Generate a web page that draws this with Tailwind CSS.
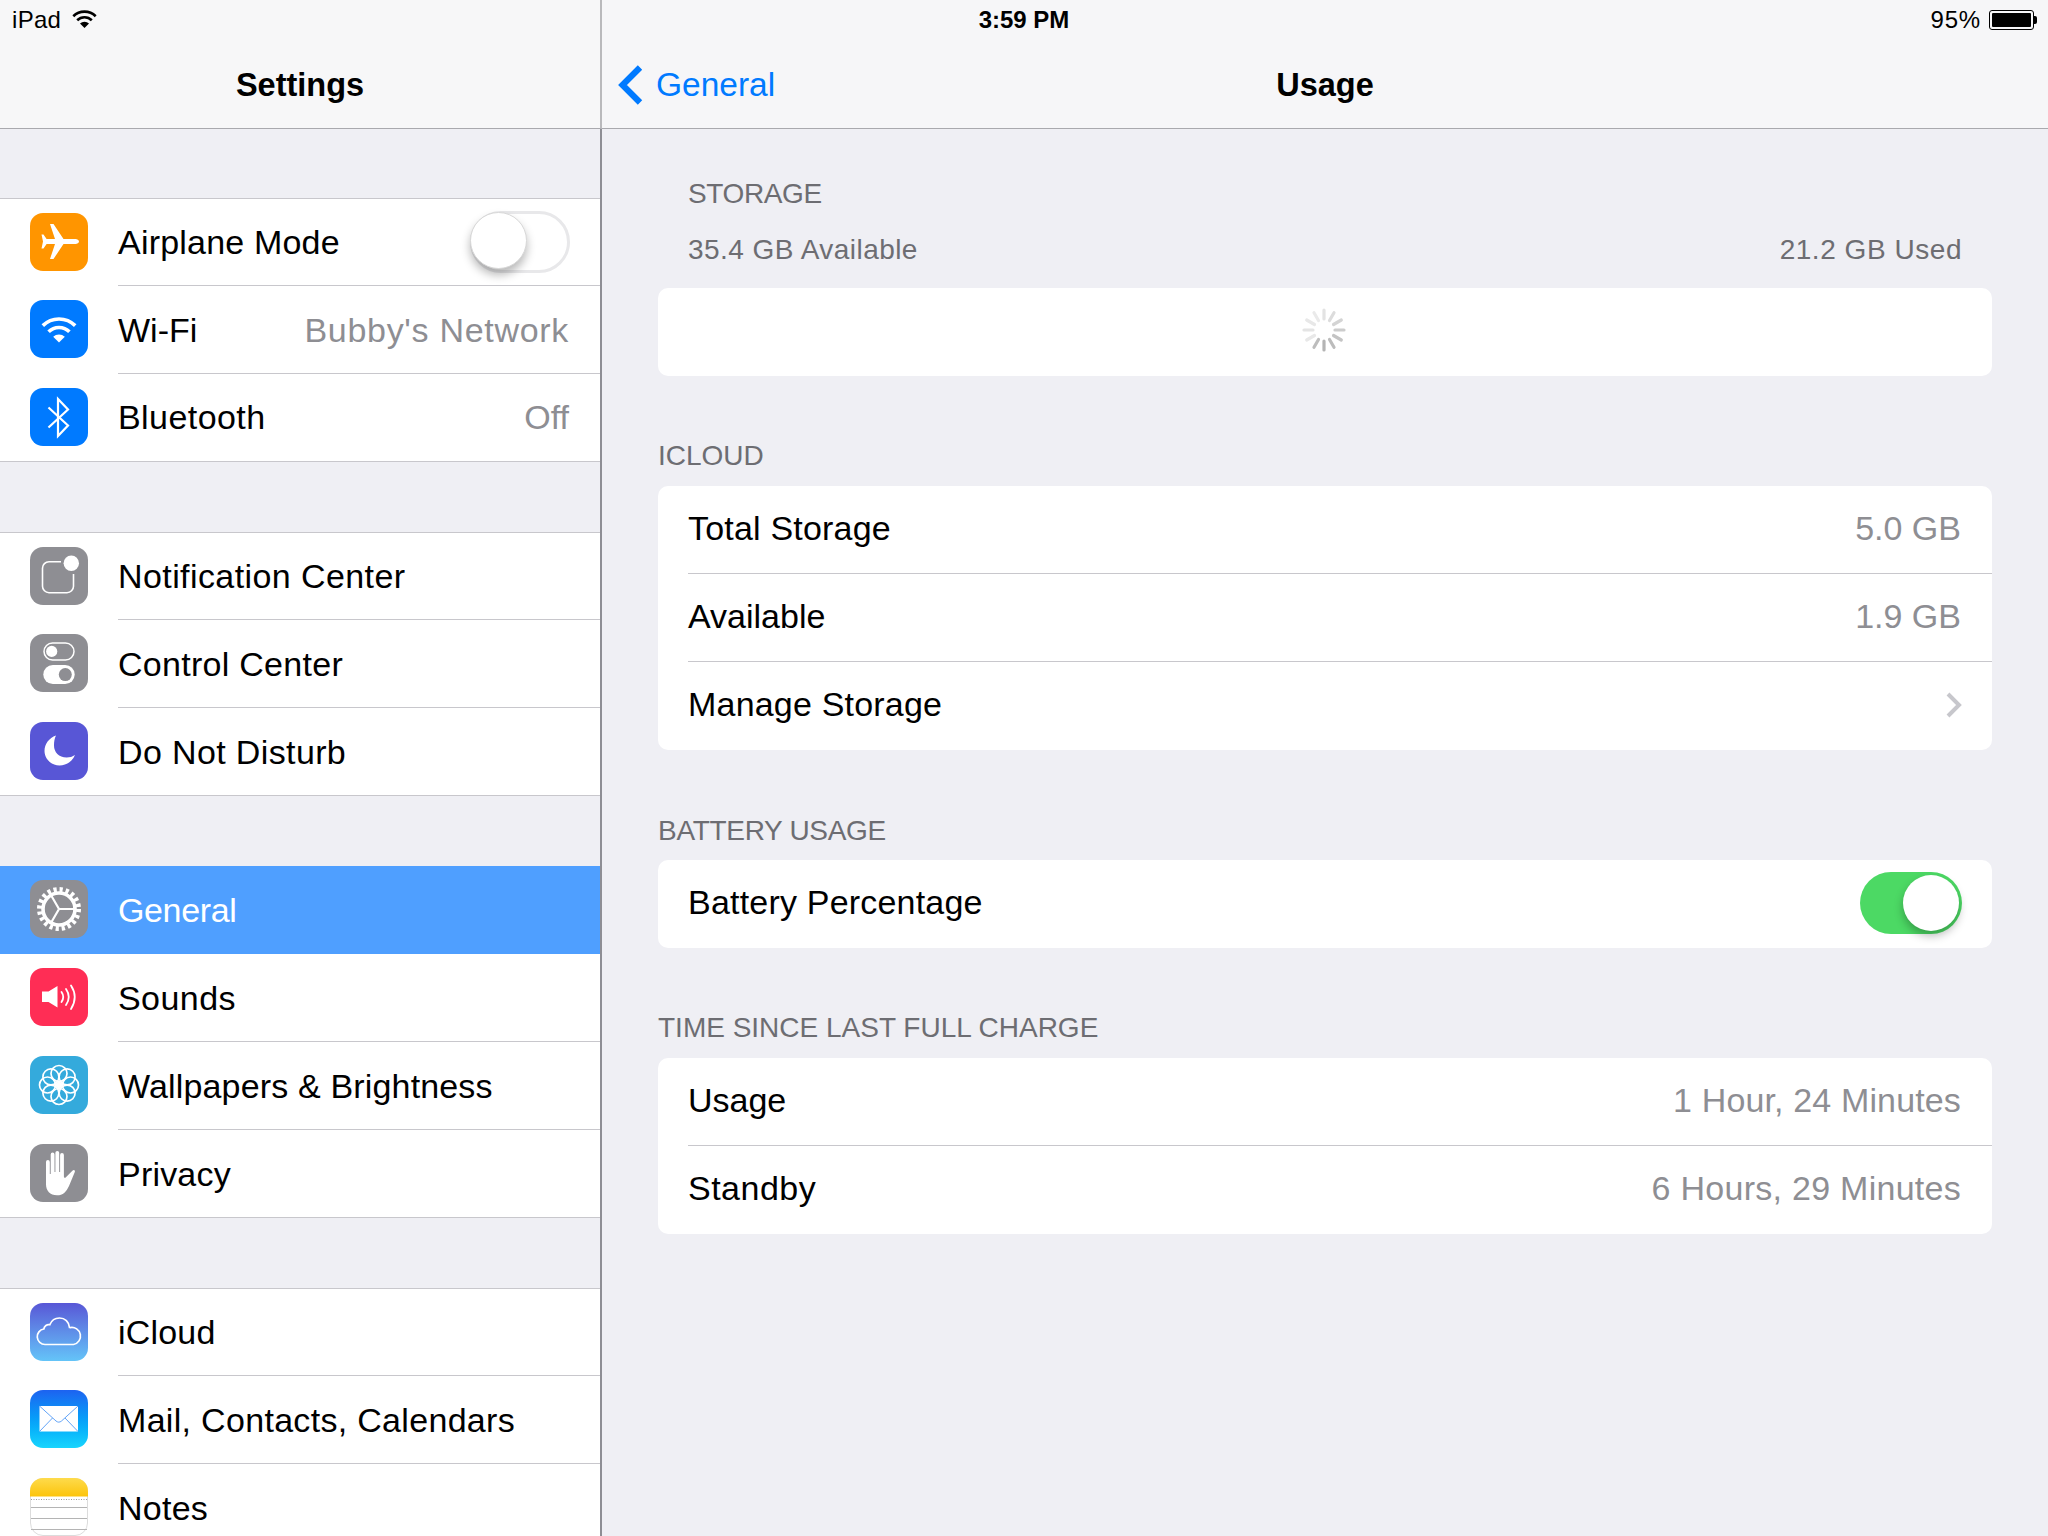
<!DOCTYPE html>
<html><head><meta charset="utf-8"><script src="https://cdn.jsdelivr.net/npm/@tailwindcss/browser@4"></script></head>
<body class="m-0">
<div class="relative flex w-[2048px] h-[1536px] overflow-hidden bg-[#efeff4] text-black font-['Liberation_Sans',Arial,sans-serif]">

  <!-- status bar -->
  <div class="absolute top-0 inset-x-0 h-[40px] text-[24px] leading-[40px] z-10">
    <div class="absolute left-[12px] top-0 flex items-center h-[40px] gap-[11px]">
      <span class="tracking-[0.3px]">iPad</span>
      <svg width="25" height="18" viewBox="0 0 25 18" class="-mt-[2px]"><g fill="none" stroke="#000" stroke-width="2.6"><path d="M1.3 6.2a16 16 0 0 1 22.4 0"/><path d="M5.2 10.2a10.4 10.4 0 0 1 14.6 0"/></g><path d="M8 13.5a6.4 6.4 0 0 1 9 0L12.5 18z" fill="#000"/></svg>
    </div>
    <div class="absolute left-0 right-0 top-0 text-center font-bold">3:59 PM</div>
    <div class="absolute right-[11px] top-0 flex items-center h-[40px] gap-[8px]">
      <span class="tracking-[0.8px]">95%</span>
      <div class="flex items-center">
        <div class="w-[45px] h-[20px] rounded-[3px] border border-black p-[2px]"><div class="w-[39px] h-full bg-black rounded-[1px]"></div></div>
        <div class="w-[3px] h-[8px] bg-black rounded-r-[2px]"></div>
      </div>
    </div>
  </div>

  <!-- sidebar -->
  <aside class="w-[602px] h-full shrink-0 flex flex-col">
    <header class="h-[129px] shrink-0 bg-[#f7f7f8] border-b border-b-[#a9a9ae] border-r-2 border-r-[#b9b9bc] pt-[40px] flex items-center justify-center">
      <h1 class="text-[32.5px] font-bold leading-[90px] mt-[1px]">Settings</h1>
    </header>
    <div class="flex-1 min-h-0 flex flex-col border-r-2 border-[#8e8e94]">

    <div class="mt-[69px] border-t border-[#c8c7cc] bg-white h-[264px] flex flex-col">
      <div class="h-[87px] flex items-center pl-[30px] shrink-0">
        <svg width="58" height="58" viewBox="0 0 58 58" class="shrink-0 -translate-y-px rounded-[13px] bg-[#ff9500]"><path d="M49 28.500c0-1.600-1.800-2.500-3.500-2.500H33.500L23.500 11H20l5 15H16.600L13.500 21.500H11.500l1.500 7-1.500 7h2l3.100-4.500H25L20 46h3.500l10-15h12c1.700 0 3.500-.9 3.500-2.500z" fill="#fff"/></svg>
        <div class="flex-1 h-full ml-[30px] border-b border-[#c8c7cc] flex items-center justify-between pr-[30px] text-[34px]">
          <span class="tracking-[0.2px]">Airplane Mode</span>
          <div class="relative w-[100px] h-[62px] rounded-full border-[3px] border-[#e8e8ea] bg-white">
            <div class="absolute -left-[3px] -top-[2px] w-[57px] h-[57px] rounded-full bg-white border border-[#d8d8d8] shadow-[0_6px_10px_rgba(0,0,0,0.28)]"></div>
          </div>
        </div>
      </div>
      <div class="h-[88px] flex items-center pl-[30px] shrink-0">
        <svg width="58" height="58" viewBox="0 0 58 58" class="shrink-0 -translate-y-px rounded-[13px] bg-[#007aff]"><g fill="none" stroke="#fff" stroke-width="3.600"><path d="M12.800 25.600a23 23 0 0 1 32.400 0"/><path d="M18.600 31.800a14.600 14.600 0 0 1 20.800 0"/></g><path d="M23.200 36.800a8.200 8.200 0 0 1 11.600 0L29 42.600z" fill="#fff"/></svg>
        <div class="flex-1 h-full ml-[30px] border-b border-[#c8c7cc] flex items-center justify-between pr-[31px] text-[34px]">
          <span class="translate-y-px">Wi-Fi</span><span class="translate-y-px text-[#8e8e93] tracking-[0.7px]">Bubby's Network</span>
        </div>
      </div>
      <div class="h-[88px] flex items-center pl-[30px] shrink-0 border-b border-[#c8c7cc]">
        <svg width="58" height="58" viewBox="0 0 58 58" class="shrink-0 -translate-y-px rounded-[13px] bg-[#007aff]"><path d="M18.500 19.500 38 37.500 28 48V11l10 10.500L18.500 39.500" fill="none" stroke="#fff" stroke-width="2.200"/></svg>
        <div class="flex-1 h-full ml-[30px] flex items-center justify-between pr-[31px] text-[34px]">
          <span class="tracking-[0.43px]">Bluetooth</span><span class="text-[#8e8e93]">Off</span>
        </div>
      </div>
    </div>

    <div class="mt-[70px] border-t border-[#c8c7cc] bg-white h-[264px] flex flex-col">
      <div class="h-[87px] flex items-center pl-[30px] shrink-0">
        <svg width="58" height="58" viewBox="0 0 58 58" class="shrink-0 -translate-y-px rounded-[13px] bg-[#8e8e93]"><path d="M31 14.700H19a6.500 6.500 0 0 0-6.500 6.500v18A6.500 6.500 0 0 0 19 45.700h18a6.500 6.500 0 0 0 6.500-6.500V27" fill="none" stroke="#fff" stroke-width="1.600"/><circle cx="41.300" cy="16.300" r="7.700" fill="#fff"/></svg>
        <div class="flex-1 h-full ml-[30px] border-b border-[#c8c7cc] flex items-center text-[34px] tracking-[0.41px]">Notification Center</div>
      </div>
      <div class="h-[88px] flex items-center pl-[30px] shrink-0">
        <svg width="58" height="58" viewBox="0 0 58 58" class="shrink-0 -translate-y-px rounded-[13px] bg-[#8e8e93]"><rect x="14" y="9" width="30" height="17" rx="8.500" fill="none" stroke="#fff" stroke-width="1.500"/><circle cx="21.700" cy="17.400" r="5.600" fill="#fff"/><rect x="13.300" y="31" width="31.400" height="19" rx="9.500" fill="#fff"/><circle cx="35.300" cy="40.600" r="6.500" fill="#8e8e93"/></svg>
        <div class="flex-1 h-full ml-[30px] border-b border-[#c8c7cc] flex items-center text-[34px] tracking-[0.28px]"><span class="translate-y-px">Control Center</span></div>
      </div>
      <div class="h-[88px] flex items-center pl-[30px] shrink-0 border-b border-[#c8c7cc]">
        <svg width="58" height="58" viewBox="0 0 58 58" class="shrink-0 -translate-y-px rounded-[13px] bg-[#5856d6]"><path d="M26 13.500c-7 2.500-11.500 8.500-11.500 15.500 0 8 6.800 14.500 15 14.500 6.700 0 12.700-4 15.500-10.500-2.500 1.700-5.300 2.500-8.300 2.500-8 0-12.700-5.500-12.700-12 0-3.800.5-7 2-10z" fill="#fff"/></svg>
        <div class="flex-1 h-full ml-[30px] flex items-center text-[34px] tracking-[0.37px]"><span class="translate-y-px">Do Not Disturb</span></div>
      </div>
    </div>

    <div class="mt-[70px] flex flex-col shrink-0 bg-white">
      <div class="h-[88px] flex items-center pl-[30px] shrink-0 bg-[#4f9fff]">
        <svg width="58" height="58" viewBox="0 0 58 58" class="shrink-0 -translate-y-px rounded-[13px] bg-[#8e8e93]"><circle cx="29" cy="29" r="19.500" fill="none" stroke="#fff" stroke-width="5" stroke-dasharray="3.200 2.925"/><circle cx="29" cy="29" r="16" fill="none" stroke="#fff" stroke-width="3.600"/><path d="M29 29H44M29 29 21.500 16M29 29 21.500 42" stroke="#fff" stroke-width="2.200" fill="none"/></svg>
        <div class="flex-1 h-full ml-[30px] flex items-center text-[34px] text-white tracking-[-0.37px]">General</div>
      </div>
      <div class="h-[88px] flex items-center pl-[30px] shrink-0">
        <svg width="58" height="58" viewBox="0 0 58 58" class="shrink-0 -translate-y-px rounded-[13px] bg-[#ff2d55]"><path d="M12 23.500h6.500L27.500 18v21.500L18.500 34H12z" fill="#fff"/><g fill="none" stroke="#fff" stroke-width="1.800" stroke-linecap="round"><path d="M31.500 24q3.500 5 0 10"/><path d="M36 21q5.500 8 0 16"/><path d="M41 17.500q7.500 11.500 0 23.500"/></g></svg>
        <div class="flex-1 h-full ml-[30px] border-b border-[#c8c7cc] flex items-center text-[34px] tracking-[0.43px]"><span class="translate-y-px">Sounds</span></div>
      </div>
      <div class="h-[88px] flex items-center pl-[30px] shrink-0">
        <svg width="58" height="58" viewBox="0 0 58 58" class="shrink-0 -translate-y-px rounded-[13px] bg-[#34aadc]"><g fill="none" stroke="#fff" stroke-width="1.700"><circle cx="29" cy="17.500" r="8"/><circle cx="37.100" cy="20.900" r="8"/><circle cx="40.500" cy="29" r="8"/><circle cx="37.100" cy="37.100" r="8"/><circle cx="29" cy="40.500" r="8"/><circle cx="20.900" cy="37.100" r="8"/><circle cx="17.500" cy="29" r="8"/><circle cx="20.900" cy="20.900" r="8"/></g><circle cx="29" cy="29" r="3.200" fill="#fff"/></svg>
        <div class="flex-1 h-full ml-[30px] border-b border-[#c8c7cc] flex items-center text-[34px] tracking-[0.16px]"><span class="translate-y-px">Wallpapers &amp; Brightness</span></div>
      </div>
      <div class="h-[88px] flex items-center pl-[30px] shrink-0 border-b border-[#c8c7cc]">
        <svg width="58" height="58" viewBox="0 0 58 58" class="shrink-0 -translate-y-px rounded-[13px] bg-[#8e8e93]"><path d="M16 18a1.900 1.900 0 0 1 3.800 0v12h.9V10.500a1.900 1.900 0 0 1 3.800 0V28h.9V8.800a1.900 1.900 0 0 1 3.800 0V28h.9V11a1.900 1.900 0 0 1 3.800 0v21.500c0 1.200 1.100 1.700 2 .7l6.500-6.500c1.600-1.500 3.300 0 2.300 1.500L39 42c-2.800 6-6 9.300-12 9.300-7 0-11-4.500-11-11z" fill="#fff"/></svg>
        <div class="flex-1 h-full ml-[30px] flex items-center text-[34px] tracking-[0.2px]"><span class="translate-y-px">Privacy</span></div>
      </div>
    </div>

    <div class="mt-[70px] border-t border-[#c8c7cc] bg-white flex-1 flex flex-col">
      <div class="h-[87px] flex items-center pl-[30px] shrink-0">
        <svg width="58" height="58" viewBox="0 0 58 58" class="shrink-0 -translate-y-px rounded-[13px] bg-gradient-to-b from-[#5856d6] to-[#64c4f8]"><path d="M15 41.500a7.800 7.800 0 0 1-1.200-15.500c.5-3 3.300-5 6-4.200C21.500 17.500 25.500 15 29.500 15c5.500 0 9.500 4 10 9.500.2 0 .5 0 .7.100a8.500 8.500 0 0 1 3.300 16.900z" fill="none" stroke="#fff" stroke-width="1.700"/></svg>
        <div class="flex-1 h-full ml-[30px] border-b border-[#c8c7cc] flex items-center text-[34px] tracking-[0.2px]">iCloud</div>
      </div>
      <div class="h-[88px] flex items-center pl-[30px] shrink-0">
        <svg width="58" height="58" viewBox="0 0 58 58" class="shrink-0 -translate-y-px rounded-[13px] bg-gradient-to-b from-[#1d62f0] to-[#19d5fd]"><rect x="9.500" y="16" width="38.500" height="25.500" fill="#fff"/><path d="M9.500 16 26 31c1.800 1.500 3.700 1.500 5.500 0L48 16M9.500 41.500 22.500 28M48 41.500 35 28" fill="none" stroke="#3b8df5" stroke-width=".8"/></svg>
        <div class="flex-1 h-full ml-[30px] border-b border-[#c8c7cc] flex items-center text-[34px] tracking-[0.31px]"><span class="translate-y-px">Mail, Contacts, Calendars</span></div>
      </div>
      <div class="h-[88px] flex items-center pl-[30px] shrink-0">
        <svg width="58" height="58" viewBox="0 0 58 58" class="shrink-0 self-start mt-[14px]"><defs><linearGradient id="ny" x1="0" y1="0" x2="0" y2="1"><stop offset="0" stop-color="#fedb4c"/><stop offset="1" stop-color="#fcc40c"/></linearGradient></defs><rect x=".5" y=".5" width="57" height="57" rx="12.500" fill="#fff" stroke="#dcdcdc"/><path d="M0 18.500V13A13 13 0 0 1 13 0h32a13 13 0 0 1 13 13v5.500z" fill="url(#ny)"/><path d="M1 21.500H57" stroke="#9a9a9a" stroke-width="1" stroke-dasharray="1 1.500"/><path d="M1 29.500H57M1 40.500H57M1 51.500H57" stroke="#b4b4b4" stroke-width="1"/></svg>
        <div class="flex-1 h-full ml-[30px] flex items-center text-[34px] tracking-[0.25px]">Notes</div>
      </div>
    </div>
    </div>
  </aside>

  <!-- detail -->
  <main class="flex-1 flex flex-col">
    <header class="relative h-[129px] shrink-0 bg-[#f6f6f8] border-b border-[#a9a9ae] pt-[40px] flex items-center justify-center">
      <div class="absolute left-[16px] top-[40px] h-[90px] flex items-center gap-[13px] text-[#007aff] text-[33.500px]">
        <svg width="25" height="40" viewBox="0 0 25 40"><path d="M22 2.500 4.500 20 22 37.500" fill="none" stroke="#007aff" stroke-width="6.200"/></svg>
        <span>General</span>
      </div>
      <h2 class="text-[32.5px] font-bold leading-[90px] mt-[1px]">Usage</h2>
    </header>

    <div class="px-[56px] flex flex-col">
      <div class="mt-[48px] px-[30px] text-[#6d6d72] text-[28px] leading-[34px]">
        <div class="tracking-[-0.37px]">STORAGE</div>
        <div class="mt-[22px] flex justify-between"><span class="tracking-[0.46px]">35.4 GB Available</span><span class="tracking-[0.54px]">21.2 GB Used</span></div>
      </div>
      <div class="mt-[21px] h-[88px] bg-white rounded-[10px] flex items-center justify-center">
        <svg width="44" height="44" viewBox="-22 -22 44 44" stroke-width="3.200" stroke-linecap="round" fill="none" class="-translate-y-[2px] -translate-x-px">
          <path d="M0-20V-11" stroke="#e3e3e3"/>
          <path d="M10-17.300 5.500-9.500" stroke="#dcdcdc"/>
          <path d="M17.300-10 9.500-5.500" stroke="#d4d4d4"/>
          <path d="M20 0H11" stroke="#cccccc"/>
          <path d="M17.300 10 9.500 5.500" stroke="#c4c4c4"/>
          <path d="M10 17.300 5.500 9.500" stroke="#bcbcbc"/>
          <path d="M0 20V11" stroke="#b4b4b4"/>
          <path d="M-10 17.300-5.500 9.500" stroke="#bdbdbd"/>
          <path d="M-17.300 10-9.500 5.500" stroke="#e8e8e8"/>
          <path d="M-20 0H-11" stroke="#e4e4e4"/>
          <path d="M-17.300-10-9.500-5.500" stroke="#e8e8e8"/>
          <path d="M-10-17.300-5.500-9.500" stroke="#eaeaea"/>
        </svg>
      </div>

      <div class="mt-[63px] h-[34px] text-[#6d6d72] text-[28px] leading-[34px]">ICLOUD</div>
      <div class="mt-[13px] bg-white rounded-[10px] text-[34px]">
        <div class="h-[88px] ml-[30px] pr-[31px] flex items-center justify-between border-b border-[#c8c7cc]"><span class="-translate-y-px tracking-[0.2px]">Total Storage</span><span class="-translate-y-px text-[#8e8e93]">5.0 GB</span></div>
        <div class="h-[88px] ml-[30px] pr-[31px] flex items-center justify-between border-b border-[#c8c7cc]"><span class="-translate-y-px">Available</span><span class="-translate-y-px text-[#8e8e93]">1.9 GB</span></div>
        <div class="h-[88px] ml-[30px] pr-[30px] flex items-center justify-between"><span class="-translate-y-[2px] tracking-[0.2px]">Manage Storage</span>
          <svg width="16" height="26" viewBox="0 0 16 26" class="-translate-y-px"><path d="M2 2 13 13 2 24" fill="none" stroke="#c7c7cc" stroke-width="4"/></svg>
        </div>
      </div>

      <div class="mt-[64px] h-[34px] text-[#6d6d72] text-[28px] leading-[34px] tracking-[-0.3px]">BATTERY USAGE</div>
      <div class="mt-[12px] bg-white rounded-[10px] text-[34px]">
        <div class="h-[88px] ml-[30px] pr-[30px] flex items-center justify-between"><span class="-translate-y-[2px] tracking-[0.2px]">Battery Percentage</span>
          <div class="relative w-[102px] h-[62px] rounded-full bg-[#4cd964] -translate-y-px">
            <div class="absolute left-[43px] top-[3px] w-[56px] h-[56px] rounded-full bg-white shadow-[0_5px_10px_rgba(0,0,0,0.28)]"></div>
          </div>
        </div>
      </div>

      <div class="mt-[63px] h-[34px] text-[#6d6d72] text-[28px] leading-[34px]">TIME SINCE LAST FULL CHARGE</div>
      <div class="mt-[13px] bg-white rounded-[10px] text-[34px]">
        <div class="h-[88px] ml-[30px] pr-[31px] flex items-center justify-between border-b border-[#c8c7cc]"><span class="-translate-y-px">Usage</span><span class="-translate-y-px text-[#8e8e93] tracking-[0.14px]">1 Hour, 24 Minutes</span></div>
        <div class="h-[88px] ml-[30px] pr-[31px] flex items-center justify-between"><span class="-translate-y-[2px] tracking-[0.5px]">Standby</span><span class="-translate-y-[2px] text-[#8e8e93] tracking-[0.27px]">6 Hours, 29 Minutes</span></div>
      </div>
    </div>
  </main>
</div>
</body></html>
